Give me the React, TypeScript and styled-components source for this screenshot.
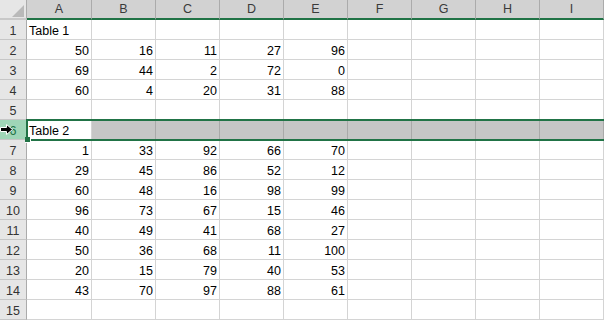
import React from 'react';
import styled, { createGlobalStyle, css } from 'styled-components';

const GREEN = '#217346';

const Global = createGlobalStyle`
  html, body { margin: 0; padding: 0; background: #fff; overflow: hidden; }
  body { font-family: "Liberation Sans", Arial, sans-serif; }
`;

const Sheet = styled.div`
  position: relative;
  display: grid;
  grid-template-columns: 27px 65px repeat(8, 64px);
  grid-auto-rows: 20px;
  width: 604px;
  font-family: "Liberation Sans", Arial, sans-serif;
  font-size: 12.5px;
  line-height: 15px;
  color: #000;
`;

const Corner = styled.div`
  box-sizing: border-box;
  background: #e6e6e6;
  border-right: 1px solid #ababab;
  border-bottom: 2px solid #c8c8c8;
  display: flex;
  justify-content: flex-end;
  align-items: flex-end;
  padding: 0 2px 1px 0;
`;

const ColHeader = styled.div`
  box-sizing: border-box;
  background: #d2d2d2;
  border-right: 1px solid #ababab;
  border-bottom: 2px solid ${GREEN};
  display: flex;
  justify-content: center;
  align-items: flex-end;
  padding-bottom: 1px;
  color: #3a3a3a;
`;

const RowHeader = styled.div<{ $selected?: boolean }>`
  box-sizing: border-box;
  background: ${(p) => (p.$selected ? '#9fd5b7' : '#e6e6e6')};
  color: ${(p) => (p.$selected ? GREEN : '#333')};
  border-right: 1px solid #ababab;
  border-bottom: 1px solid #c6c6c6;
  display: flex;
  justify-content: center;
  align-items: flex-end;
`;

const Cell = styled.div<{ $num?: boolean; $shaded?: boolean }>`
  box-sizing: border-box;
  border-right: 1px solid #d4d4d4;
  border-bottom: 1px solid #d4d4d4;
  display: flex;
  align-items: flex-end;
  justify-content: ${(p) => (p.$num ? 'flex-end' : 'flex-start')};
  padding: 0 2px 0 2px;
  white-space: nowrap;
  overflow: visible;
  ${(p) =>
    p.$shaded &&
    css`
      background: #c6c6c6;
      border-right-color: #a9a9a9;
    `}
`;

const Selection = styled.div`
  position: absolute;
  box-sizing: border-box;
  left: 26px;
  top: 119px;
  width: 600px;
  height: 22px;
  border: 2px solid ${GREEN};
  pointer-events: none;
`;

const FillHandle = styled.div`
  position: absolute;
  left: 25px;
  top: 137px;
  width: 5px;
  height: 5px;
  background: ${GREEN};
  border-right: 1px solid #fff;
  border-bottom: 1px solid #fff;
`;

const Cursor = styled.svg`
  position: absolute;
  left: 0;
  top: 124px;
`;

const CornerMark = () => (
  <svg width="12" height="12" viewBox="0 0 12 12">
    <polygon points="12,0 12,12 0,12" fill="#b9b9b9" />
  </svg>
);

const cols = ['A', 'B', 'C', 'D', 'E', 'F', 'G', 'H', 'I'];

type Row = (string | number)[];
const rows: Row[] = [
  ['Table 1'],
  [50, 16, 11, 27, 96],
  [69, 44, 2, 72, 0],
  [60, 4, 20, 31, 88],
  [],
  ['Table 2'],
  [1, 33, 92, 66, 70],
  [29, 45, 86, 52, 12],
  [60, 48, 16, 98, 99],
  [96, 73, 67, 15, 46],
  [40, 49, 41, 68, 27],
  [50, 36, 68, 11, 100],
  [20, 15, 79, 40, 53],
  [43, 70, 97, 88, 61],
  [],
];

const SELECTED_ROW = 6;

export default function App() {
  return (
    <>
      <Global />
      <Sheet>
        <Corner>
          <CornerMark />
        </Corner>
        {cols.map((c) => (
          <ColHeader key={c}>{c}</ColHeader>
        ))}
        {rows.map((r, i) => {
          const rowNum = i + 1;
          const sel = rowNum === SELECTED_ROW;
          return (
            <React.Fragment key={rowNum}>
              <RowHeader $selected={sel}>{rowNum}</RowHeader>
              {cols.map((c, j) => {
                const v = r[j];
                return (
                  <Cell key={c} $num={typeof v === 'number'} $shaded={sel && j > 0}>
                    {v !== undefined ? v : ''}
                  </Cell>
                );
              })}
            </React.Fragment>
          );
        })}
        <Selection />
        <FillHandle />
        <Cursor width="14" height="11" viewBox="0 0 14 11">
          <polygon
            points="0.5,3.5 6.5,3.5 6.5,0.5 12.5,5.5 6.5,10.5 6.5,7.5 0.5,7.5"
            fill="#000"
            stroke="#fff"
            strokeWidth="1"
          />
        </Cursor>
      </Sheet>
    </>
  );
}
